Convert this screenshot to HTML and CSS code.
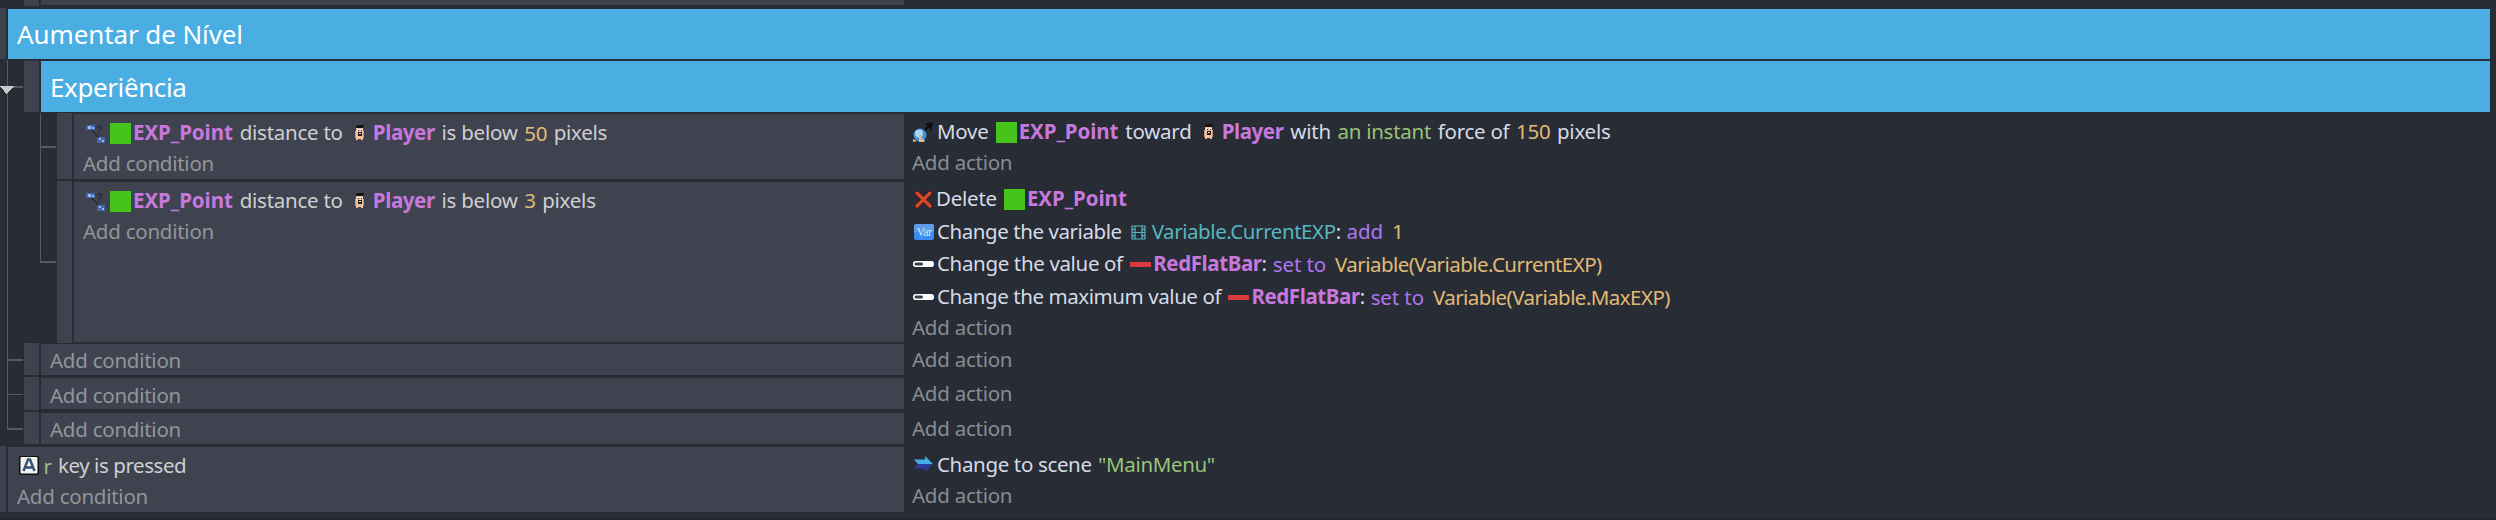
FILE: index.html
```html
<!DOCTYPE html>
<html lang="pt">
<head>
<meta charset="utf-8">
<title>Events</title>
<link rel="stylesheet" href="styles.css">
</head>
<body>
<svg class="defs" width="0" height="0">
  <symbol id="distance" viewBox="0 0 19 18">
    <path d="M5 4L15 15" stroke="#252a35" stroke-width="1.5"/>
    <path d="M0 0h9v5H0zM11 12h8v6h-8z" fill="#4766ae"/>
    <path d="M2 1h3v3H2zM6 2h2v2H6zM13 13h2v2h-2zM16 15h2v2h-2z" fill="#9db9f2"/>
    <path d="M11.500 3q0-2 2-2t2 1.800q0 1-2 2.400v1" fill="none" stroke="#292d36" stroke-width="1.600"/>
    <path d="M12.700 8h1.600v1.500h-1.600z" fill="#292d36"/>
  </symbol>
  <symbol id="player" viewBox="0 0 9 16">
    <path d="M1 3h7v12H6v-1H3v1H1z" fill="#f3bf9d"/>
    <path d="M1 1h1V0h7v2H8v1H1z" fill="#171313"/>
    <path d="M0 6h1v7H0zM8 6h1v7H8z" fill="#c9967b"/>
    <path d="M2 4h2v2H2zM5 4h3v2H5z" fill="#e9eef0"/>
    <path d="M3 5h1v1H3zM6 5h1v1H6zM3 7h4v4H3z" fill="#241d1d"/>
    <path d="M4 8h2v1H4z" fill="#f1e6df"/>
  </symbol>
  <symbol id="force" viewBox="0 0 21 20">
    <path d="M11 9L17 3" stroke="#0c0e12" stroke-width="2.200"/>
    <path d="M12 2L20 0L18 9L16.500 5z" fill="#0c0e12"/>
    <circle cx="7" cy="13" r="6.500" fill="#3f91dc"/>
    <circle cx="6" cy="11.500" r="4" fill="#a5d7f6"/>
    <path d="M0 20v-3l4 2zM6 20v-7q1.500-2 2.500 0v3l3 2v2z" fill="#e3b79c"/>
  </symbol>
  <symbol id="delete" viewBox="0 0 19 19">
    <path d="M3 3L16 16M16 3L3 16" stroke="#3b1712" stroke-width="5" stroke-linecap="round"/>
    <path d="M3 3L16 16M16 3L3 16" stroke="#d4492c" stroke-width="3.400" stroke-linecap="round"/>
  </symbol>
  <symbol id="film" viewBox="0 0 15 15">
    <path d="M1 1h13v13H1zM4 1v13M11 1v13M4 7.500h7M1 4.300h3M1 7.500h3M1 10.700h3M11 4.300h3M11 7.500h3M11 10.700h3" fill="none" stroke="#56b6c2" stroke-width="1.200"/>
  </symbol>
  <symbol id="gauge" viewBox="0 0 21 6">
    <rect width="21" height="6" rx="2.800" fill="#fff"/>
    <rect x="1.500" y="1.500" width="8.500" height="3" rx="1.500" fill="#3b3f45"/>
  </symbol>
  <symbol id="key" viewBox="0 0 20 19">
    <rect width="20" height="19" rx="2" fill="#0d0f13"/>
    <rect x="1.500" y="1" width="17" height="16.500" rx="1" fill="#f1f1f1"/>
    <path d="M4.500 15L9 3.500h2L15.500 15M6.500 11.500h7" fill="none" stroke="#34516f" stroke-width="2.400"/>
  </symbol>
  <symbol id="arrow" viewBox="0 0 19 16">
    <path d="M0 3.500l4 4.500h15L11 0v3.500z" fill="#43aee6"/>
    <path d="M0 12.500l4-4.500h15l-8 8v-3.500z" fill="#2c3a9c"/>
  </symbol>
</svg>

<main class="sheet">
  <div class="event level1 clipped"><i class="handle"></i><div class="conditions"></div></div>
  <div class="event level0 group first"><i class="handle"></i><h1 class="bar">Aumentar de Nível</h1></div>
  <div class="event level1 group second"><i class="handle"></i><h2 class="bar">Experiência</h2></div>

  <div class="event level2 near">
    <i class="handle"></i>
    <div class="conditions">
      <p class="line"><svg class="icon distance"><use href="#distance"/></svg><i class="green"></i><b class="exp">EXP_Point</b> distance to <svg class="icon player"><use href="#player"/></svg><b>Player</b> is below <span class="num low">50</span> pixels</p>
      <p class="line add">Add condition</p>
    </div>
    <div class="actions">
      <p class="line"><svg class="icon force"><use href="#force"/></svg>Move <i class="green"></i><b class="exp">EXP_Point</b> toward <svg class="icon player"><use href="#player"/></svg><b>Player</b> with <span class="str">an instant</span> force of <span class="num">150</span> pixels</p>
      <p class="line add">Add action</p>
    </div>
  </div>

  <div class="event level2 collect">
    <i class="handle"></i>
    <div class="conditions">
      <p class="line"><svg class="icon distance"><use href="#distance"/></svg><i class="green"></i><b class="exp">EXP_Point</b> distance to <svg class="icon player"><use href="#player"/></svg><b>Player</b> is below <span class="num">3</span> pixels</p>
      <p class="line add">Add condition</p>
    </div>
    <div class="actions">
      <p class="line"><svg class="icon delete"><use href="#delete"/></svg>Delete <i class="green"></i><b class="exp">EXP_Point</b></p>
      <p class="line tight"><svg class="icon var" viewBox="0 0 20 16"><rect width="20" height="16" rx="2" fill="#3a8cf0"/><path d="M2 0h16q2 0 2 2v6H0V2q0-2 2-2z" fill="#5b9ce6"/><text x="10" y="12" text-anchor="middle" font-family="Liberation Serif, serif" font-size="11.500" fill="#dbe9fb">Var</text></svg>Change the variable <svg class="icon film"><use href="#film"/></svg><span class="scenevar">Variable.CurrentEXP</span>: <span class="op">add</span> <span class="num arg">1</span></p>
      <p class="line value"><svg class="icon gauge"><use href="#gauge"/></svg>Change the value of <i class="red"></i><b>RedFlatBar</b>: <span class="op low">set to</span> <span class="num arg low">Variable(Variable.CurrentEXP)</span></p>
      <p class="line tight"><svg class="icon gauge"><use href="#gauge"/></svg>Change the maximum value of <i class="red"></i><b>RedFlatBar</b>: <span class="op low">set to</span> <span class="num arg low">Variable(Variable.MaxEXP)</span></p>
      <p class="line add">Add action</p>
    </div>
  </div>

  <div class="event level1 empty e1"><i class="handle"></i><div class="conditions"><p class="line add">Add condition</p></div><div class="actions"><p class="line add">Add action</p></div></div>
  <div class="event level1 empty e2"><i class="handle"></i><div class="conditions"><p class="line add">Add condition</p></div><div class="actions"><p class="line add">Add action</p></div></div>
  <div class="event level1 empty e3"><i class="handle"></i><div class="conditions"><p class="line add">Add condition</p></div><div class="actions"><p class="line add">Add action</p></div></div>

  <div class="event level0 keypress">
    <i class="handle"></i>
    <div class="conditions">
      <p class="line tight"><svg class="icon key"><use href="#key"/></svg><span class="str low">r</span> key is pressed</p>
      <p class="line add">Add condition</p>
    </div>
    <div class="actions">
      <p class="line value"><svg class="icon arrow"><use href="#arrow"/></svg>Change to scene <span class="str">"MainMenu"</span></p>
      <p class="line add">Add action</p>
    </div>
  </div>

  <svg class="tree" width="60" height="440" viewBox="0 0 60 440" shape-rendering="crispEdges">
    <path d="M7 60h1v370H7zM13 86h10v2H13zM7 359h16v2H7zM7 394h16v1H7zM7 428h16v2H7zM40 113h1v150h-1zM40 146h16v2H40zM40 261h16v2H40z" fill="#555963"/>
    <path d="M0 86h14L6.500 94z" fill="#c8c8c8"/>
  </svg>
</main>
</body>
</html>
```
FILE: styles.css
```css
body {
  margin: 0;
  background: #282c34;
}

.defs {
  position: absolute;
}

.sheet {
  position: relative;
  width: 2496px;
  height: 518px;
  overflow: hidden;
  border-bottom: 2px solid #22252c;
  font: 20.5px "Noto Sans", "Open Sans", sans-serif;
  letter-spacing: -0.25px;
  color: #d5dbe8;
}

.event {
  display: grid;
  box-sizing: border-box;
}

.level0 { grid-template-columns: 6px 896px 1fr; column-gap: 2px; }
.level1 { grid-template-columns: 15px 863px 1fr; column-gap: 2px; padding-left: 24px; }
.level2 { grid-template-columns: 15px 830px 1fr; column-gap: 2px; padding-left: 57px; }

.handle { background: #3f4350; }

.conditions {
  box-sizing: border-box;
  background: #3f4350;
  color: #cfcfcf;
  padding-left: 9px;
}

.actions {
  box-sizing: border-box;
  padding-left: 6px;
}

.clipped { height: 6px; margin-bottom: 2px; }
.clipped .conditions { height: 5px; }

.group { padding-right: 6px; }
.group .bar {
  grid-column: 2 / 4;
  margin: 0;
  background: #4aaee3;
  color: #fff;
  font-weight: 400;
  font-size: 26px;
  letter-spacing: -0.4px;
  padding-left: 9px;
}
.first { height: 51px; margin-bottom: 2px; }
.first .bar { margin-top: 1px; line-height: 51px; height: 50px; letter-spacing: -0.1px; }
.second { height: 51px; margin-bottom: 1px; }
.second .bar { line-height: 52px; height: 51px; }

.line {
  margin: 0;
  height: 31px;
  line-height: 31px;
  white-space: nowrap;
}

.tight { letter-spacing: -0.43px; }
.value { letter-spacing: -0.35px; }

.conditions .add { color: #93959a; }
.actions .add { color: #898c95; }

.near { height: 65px; margin-bottom: 3px; }
.collect { height: 160px; margin-bottom: 2px; }
.near .conditions, .keypress .conditions { margin-top: 1px; padding-top: 3px; }
.near .actions, .keypress .actions { padding-top: 3px; }
.collect .conditions { margin: 1px 0; padding-top: 3px; }
.collect .actions { padding-top: 1px; }
.collect .actions .line:not(.add) { height: 32.5px; line-height: 32.5px; }

.empty .conditions { margin-top: 1px; }
.empty .conditions .line { line-height: 32px; }
.empty .actions .line { line-height: 32px; }
.e1 { height: 32px; margin-bottom: 2px; }
.e2 { height: 33px; margin-bottom: 2px; }
.e2 .conditions { height: 31px; }
.e2 .conditions .line { line-height: 34px; }
.e3 { height: 32px; margin-bottom: 2px; }
.keypress { height: 65px; }

b {
  color: #c678dd;
  font-weight: 700;
  letter-spacing: -0.4px;
}

.exp { letter-spacing: -0.05px; }
.exp, .player + b { margin-right: 1.8px; }

.num { color: #e0bb76; margin: 0 1.5px; }
.str { color: #98c379; margin: 0 1.5px; }
.op { color: #b074f0; letter-spacing: -0.1px; margin-left: 1px; }
.scenevar { color: #56b6c2; }
.arg { margin-left: 4px; letter-spacing: -0.55px; }
.low { vertical-align: -1px; line-height: 1; }

.icon { vertical-align: -3px; }
.icon.distance { width: 19px; height: 18px; margin: 0 5px 0 3px; }
.icon.player { width: 9px; height: 16px; margin: 0 9px 0 7px; vertical-align: -1px; }
.icon.force { width: 21px; height: 20px; margin: 0 3px 0 1px; }
.icon.delete { width: 19px; height: 19px; margin: 0 3px 0 2px; }
.icon.var { width: 20px; height: 16px; margin: 0 3px 0 2px; vertical-align: -1px; }
.icon.film { width: 15px; height: 15px; margin: 0 6px 0 4px; vertical-align: -1px; }
.icon.gauge { width: 21px; height: 6px; margin: 0 3px 0 1px; vertical-align: 4px; }
.icon.key { width: 20px; height: 19px; margin: 0 3px 0 2px; vertical-align: -2px; }
.icon.arrow { width: 19px; height: 16px; margin: 0 4px 0 2px; vertical-align: 0; }

.green {
  display: inline-block;
  width: 21px;
  height: 21px;
  margin: 0 2px 0 0;
  background: #46c41c;
  vertical-align: -4px;
}

.actions .green { margin-left: 2px; }

.red {
  display: inline-block;
  width: 21px;
  height: 5px;
  margin: 0 2.5px 0 2px;
  background: #d93a3e;
  vertical-align: 4px;
}

.tree {
  position: absolute;
  left: 0;
  top: 0;
}
```
